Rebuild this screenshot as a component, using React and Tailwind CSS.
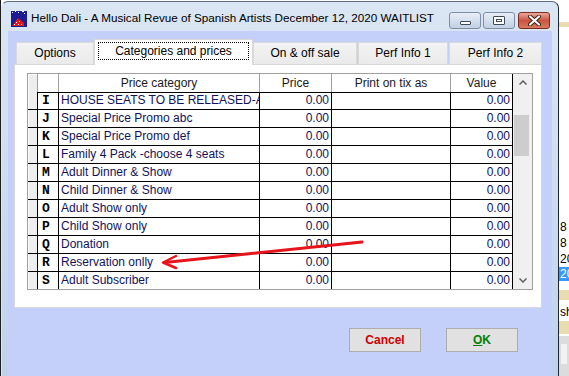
import React from "react";

const rows = [
  ["I", "HOUSE SEATS TO BE RELEASED-ALL"],
  ["J", "Special Price Promo abc"],
  ["K", "Special Price Promo def"],
  ["L", "Family 4 Pack -choose 4 seats"],
  ["M", "Adult Dinner & Show"],
  ["N", "Child Dinner & Show"],
  ["O", "Adult Show only"],
  ["P", "Child Show only"],
  ["Q", "Donation"],
  ["R", "Reservation onlly"],
  ["S", "Adult Subscriber"],
];

function TitleIcon() {
  return (
    <svg width="16" height="16" viewBox="0 0 16 16" className="shrink-0">
      <rect width="16" height="16" fill="#1c1c92" />
      <rect x="1" y="1" width="1" height="1" fill="#fff" />
      <rect x="4" y="0" width="1" height="1" fill="#fff" />
      <rect x="7" y="1" width="1" height="1" fill="#fff" />
      <rect x="11" y="0" width="2" height="1" fill="#fff" />
      <rect x="13" y="2" width="1" height="1" fill="#fff" />
      <polygon points="1,15 7,7 13,12 13,15" fill="#e01818" />
      <rect x="5" y="11" width="1" height="1" fill="#fff" />
      <rect x="8" y="10" width="1" height="1" fill="#fff" />
      <rect x="3" y="13" width="1" height="1" fill="#fff" />
      <rect x="10" y="13" width="1" height="1" fill="#fff" />
      <rect x="7" y="13" width="1" height="1" fill="#fff" />
    </svg>
  );
}

function Chevron({ up }) {
  return (
    <svg width="8" height="5" viewBox="0 0 8 5">
      <polyline
        points={up ? "0.5,4.5 4,1 7.5,4.5" : "0.5,0.5 4,4 7.5,0.5"}
        fill="none"
        stroke="#606060"
        strokeWidth="1.5"
      />
    </svg>
  );
}

export default function App() {
  return (
    <div className="relative flex h-[376px] w-[569px] overflow-hidden bg-white font-['Liberation_Sans',Arial,sans-serif] text-[12px] text-black">
      <div className="w-[1px] shrink-0 bg-[#1e1e1e]" />

      {/* dialog window */}
      <div className="mt-[1px] flex h-[380px] w-[558px] shrink-0 flex-col rounded-t-[7px] border border-b-0 border-l-[#dfe6ef] border-r-[#1b2533] border-t-[#5d6d84] bg-gradient-to-b from-[#dbe6f4] to-[#bfd2ea]">
        {/* title bar */}
        <div className="flex h-[29px] items-start pl-[9px] pt-[9px]">
          <TitleIcon />
          <span className="ml-[4px] mt-[-1px] whitespace-nowrap text-[11.7px] leading-[16px] text-black">
            Hello Dali - A Musical Revue of Spanish Artists December 12, 2020 WAITLIST
          </span>
          <div className="ml-auto mr-[8px] mt-[1px] flex gap-[2px]">
            <div className="flex h-[17px] w-[32px] items-end justify-center rounded-[3px] border border-[#7d8ea6] bg-gradient-to-b from-[#e8eef7] to-[#c2d0e4] pb-[3px]">
              <div className="h-[4px] w-[11px] rounded-[1px] border border-[#3c4a5c] bg-white" />
            </div>
            <div className="flex h-[17px] w-[32px] items-center justify-center rounded-[3px] border border-[#7d8ea6] bg-gradient-to-b from-[#e8eef7] to-[#c2d0e4]">
              <div className="flex h-[9px] w-[12px] items-center justify-center rounded-[1px] border border-[#3c4a5c] bg-white">
                <div className="h-[3px] w-[6px] border border-[#3c4a5c]" />
              </div>
            </div>
            <div className="ml-[1px] flex h-[17px] w-[32px] items-center justify-center rounded-[3px] border border-[#7b2c20] bg-gradient-to-b from-[#eaa898] via-[#c9533f] to-[#d77a5f]">
              <svg width="13" height="11" viewBox="0 0 13 11">
                <path d="M2 1.5 L11 9.5 M11 1.5 L2 9.5" stroke="#3d1a14" strokeWidth="4" strokeLinecap="round" />
                <path d="M2 1.5 L11 9.5 M11 1.5 L2 9.5" stroke="#ffffff" strokeWidth="2.2" strokeLinecap="round" />
              </svg>
            </div>
          </div>
        </div>

        {/* frame + client */}
        <div className="flex-1 px-[6px]">
          <div className="h-full bg-[#c5d0fa] pl-[6px] pt-[8px]">
            {/* tabs */}
            <div className="flex h-[26px] w-[528px] items-end border-b border-[#d9d9d9] pl-[2px]">
              <div className="flex h-[22px] w-[78px] items-center justify-center border border-b-0 border-[#d9d9d9] bg-gradient-to-b from-[#f3f3f3] to-[#eaeaea] pb-[2px]">
                Options
              </div>
              <div className="relative z-10 -mb-px flex h-[26px] w-[159px] border border-b-0 border-[#d9d9d9] bg-white px-[3px] pb-[5px] pt-[2px]">
                <div className="flex flex-1 items-center justify-center border border-dotted border-black">
                  Categories and prices
                </div>
              </div>
              <div className="flex h-[22px] w-[104px] items-center justify-center border border-b-0 border-[#d9d9d9] bg-gradient-to-b from-[#f3f3f3] to-[#eaeaea] pb-[2px]">
                On &amp; off sale
              </div>
              <div className="ml-[1px] flex h-[22px] w-[90px] items-center justify-center border border-b-0 border-[#d9d9d9] bg-gradient-to-b from-[#f3f3f3] to-[#eaeaea] pb-[2px]">
                Perf Info 1
              </div>
              <div className="ml-[1px] flex h-[22px] w-[93px] items-center justify-center border border-b-0 border-[#d9d9d9] bg-gradient-to-b from-[#f3f3f3] to-[#eaeaea] pb-[2px]">
                Perf Info 2
              </div>
            </div>

            {/* tab panel */}
            <div className="h-[243px] w-[528px] border border-t-0 border-[#d9d9d9] bg-white pl-[12px] pt-[8px]">
              <div className="flex h-[217px] w-[506px] overflow-hidden border border-[#a0a0a0]">
                <div className="grid w-[485px] grid-cols-[10px_21px_201px_72px_119px_62px] auto-rows-[18px] content-start text-[12px] leading-[17px]">
                  {/* header */}
                  <div className="h-[19px] border-b border-r border-b-black border-r-[#a0a0a0] bg-[#eeeeee] shadow-[inset_1px_1px_0_#ffffff]" />
                  <div className="h-[19px] border-b border-r border-b-black border-r-[#a0a0a0]" />
                  <div className="h-[19px] border-b border-r border-b-black border-r-[#a0a0a0] pt-[1px] text-center text-[#1a1a1a]">
                    Price category
                  </div>
                  <div className="h-[19px] border-b border-r border-b-black border-r-[#a0a0a0] pt-[1px] text-center text-[#1a1a1a]">
                    Price
                  </div>
                  <div className="h-[19px] border-b border-r border-b-black border-r-[#a0a0a0] pt-[1px] text-center text-[#1a1a1a]">
                    Print on tix as
                  </div>
                  <div className="h-[19px] border-b border-r border-b-black border-r-black pt-[1px] text-center text-[#1a1a1a]">
                    Value
                  </div>

                  {rows.map(([code, name]) => (
                    <React.Fragment key={code}>
                      <div className="border-b border-r border-black bg-[#eeeeee] shadow-[inset_1px_0_0_#ffffff]" />
                      <div className="border-b border-r border-black pl-[4px] font-['Liberation_Mono',monospace] text-[13px] font-bold leading-[17px]">
                        {code}
                      </div>
                      <div className="overflow-hidden whitespace-nowrap border-b border-r border-black pl-[2px] text-[#12125a]">
                        {name}
                      </div>
                      <div className="border-b border-r border-black pr-[2px] text-right text-[#12125a]">
                        0.00
                      </div>
                      <div className="border-b border-r border-black" />
                      <div className="border-b border-r border-black pr-[2px] text-right text-[#12125a]">
                        0.00
                      </div>
                    </React.Fragment>
                  ))}
                </div>

                {/* scrollbar */}
                <div className="flex w-[19px] flex-col bg-[#f0f0f0]">
                  <div className="flex h-[17px] items-center justify-center">
                    <Chevron up />
                  </div>
                  <div className="ml-[1px] mt-[24px] h-[41px] w-[15px] bg-[#cdcdcd]" />
                  <div className="mt-auto flex h-[17px] items-center justify-center">
                    <Chevron />
                  </div>
                </div>
              </div>
            </div>

            {/* buttons */}
            <div className="mt-[20px] flex w-[504px] justify-end gap-[25px]">
              <button className="h-[24px] w-[72px] border border-[#adadad] bg-[#e1e1e1] text-[12px] font-bold text-[#cc0000]">
                Cancel
              </button>
              <button className="h-[24px] w-[72px] border border-[#adadad] bg-[#e1e1e1] text-[12px] font-bold text-[#008000]">
                <span className="underline">O</span>K
              </button>
            </div>
          </div>
        </div>
      </div>

      {/* app behind the dialog */}
      <div className="flex w-[10px] shrink-0 flex-col bg-white text-[12px] leading-[14px]">
        <div className="mt-[22px] h-[5px] bg-[#eadcae]" />
        <div className="mt-[193px] pl-[1px]">8</div>
        <div className="mt-[2px] pl-[1px]">8</div>
        <div className="mt-[2px] pl-[1px]">20</div>
        <div className="mt-[1px] h-[14px] bg-[#3399ff] pl-[1px] text-white">20</div>
        <div className="mt-[9px] h-[10px] bg-[#eadcae]" />
        <div className="mt-[5px] pl-[1px]">sh</div>
        <div className="mt-[2px] h-[13px] bg-[#eadcae]" />
        <div className="mt-[2px] flex-1 bg-[#dcdcdc] pl-[2px] pt-[8px]">
          <div className="h-[20px] w-[6px] bg-[#f2f2f2]" />
        </div>
      </div>

      {/* red annotation arrow */}
      <svg className="pointer-events-none absolute inset-0" width="569" height="376">
        <line x1="362" y1="242" x2="165" y2="262.5" stroke="#e8141c" strokeWidth="3" strokeLinecap="round" />
        <polyline points="176,256 163,262.5 176,268" fill="none" stroke="#e8141c" strokeWidth="2.5" strokeLinecap="round" strokeLinejoin="round" />
      </svg>
    </div>
  );
}
